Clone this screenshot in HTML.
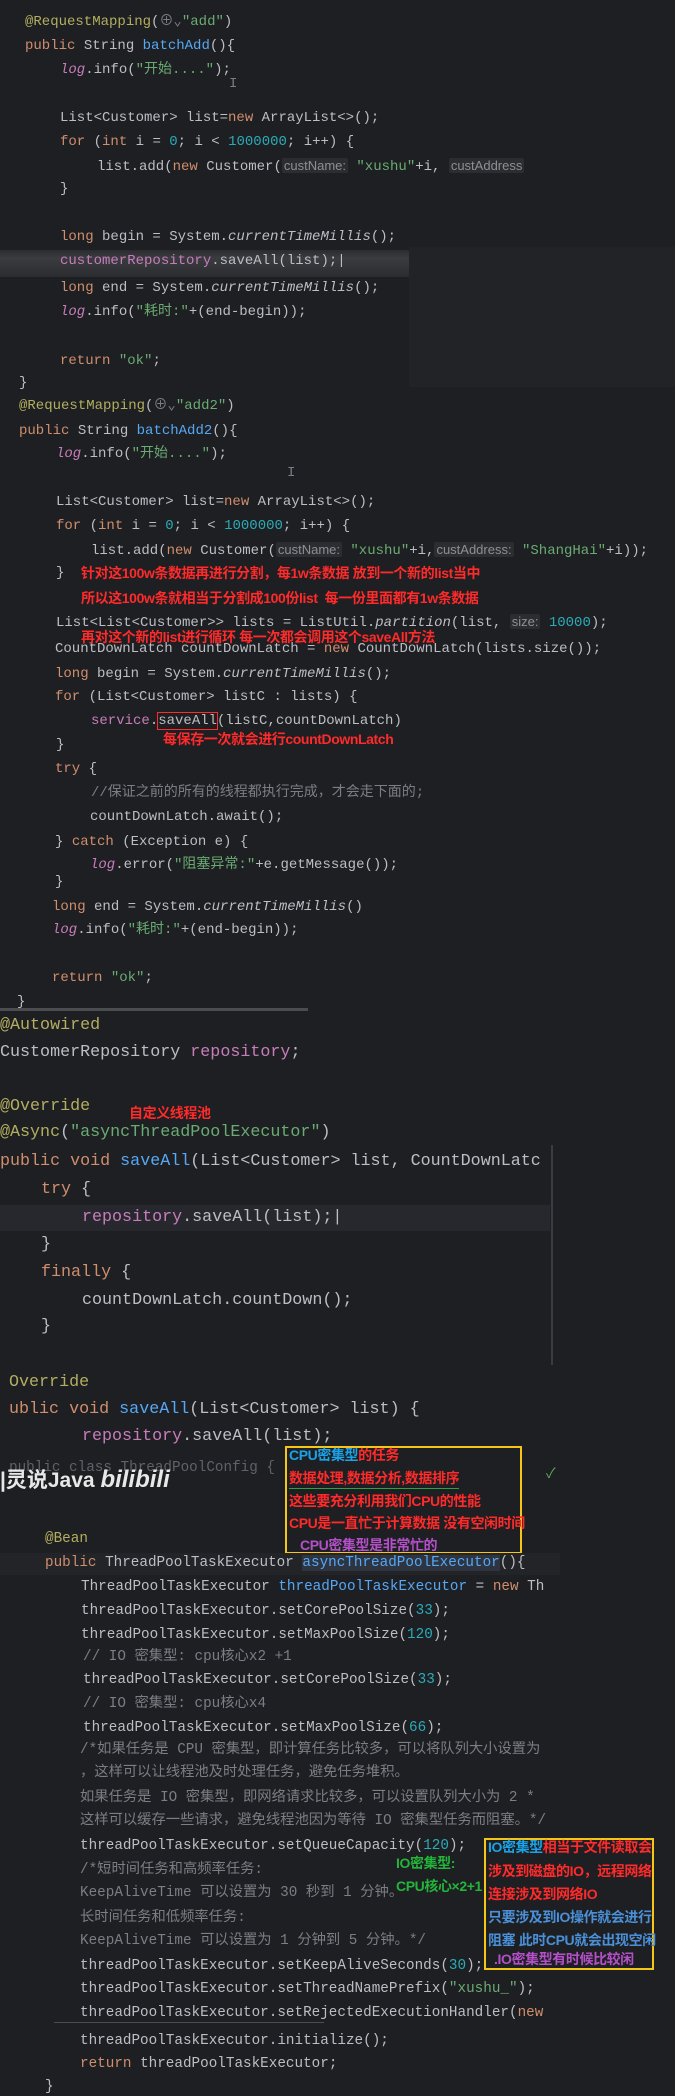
<!DOCTYPE html>
<html><head><meta charset="utf-8"><style>
body{margin:0;width:675px;height:2096px;background:#1e1f22;overflow:hidden;position:relative;font-family:"Liberation Mono","Noto Sans CJK SC",monospace;color:#bcbec4}
.l{position:absolute;white-space:pre;line-height:20px;font-size:14px}
.b{font-size:16.7px;line-height:22px}
.t{font-size:14.3px}
.k{color:#cf8e6d}.a{color:#b3ae60}.s{color:#6aab73}.n{color:#2aacb8}.f{color:#c77dbb}.m{color:#56a8f5}.c{color:#7a7e85}.i{font-style:italic}
.h{background:#2b2d30;color:#8c8f94;font-family:"Liberation Sans",sans-serif;font-size:13px;padding:0 2px;border-radius:2px}
.r{position:absolute;white-space:pre;font-family:"Liberation Sans","Noto Sans CJK SC",sans-serif;font-weight:bold;font-size:14px;color:#ff2a2a;line-height:20px;letter-spacing:-0.4px}
.box{position:absolute;border:2px solid #f5c518}
</style></head><body>
<div style="position:absolute;left:409px;top:247px;width:266px;height:140px;background:#222327"></div>
<div style="position:absolute;left:0;top:250px;width:409px;height:27px;background:linear-gradient(#2a2c30,#3a3c40 30%,#2a2c30)"></div>
<div class="l" style="left:25px;top:12px"><span class="a">@RequestMapping</span>(<span class="c">⊕⌄</span><span class="s">"add"</span>)</div>
<div class="l" style="left:25px;top:36px"><span class="k">public</span> String <span class="m">batchAdd</span>(){</div>
<div class="l" style="left:60px;top:60px"><span class="f i">log</span>.info(<span class="s">"开始...."</span>);</div>
<div class="l c" style="left:229px;top:74px">I</div>
<div class="l" style="left:60px;top:108px">List&lt;Customer&gt; list=<span class="k">new</span> ArrayList&lt;&gt;();</div>
<div class="l" style="left:60px;top:132px"><span class="k">for</span> (<span class="k">int</span> i = <span class="n">0</span>; i &lt; <span class="n">1000000</span>; i++) {</div>
<div class="l" style="left:97px;top:156px">list.add(<span class="k">new</span> Customer(<span class="h">custName:</span> <span class="s">"xushu"</span>+i, <span class="h">custAddress</span></div>
<div class="l" style="left:60px;top:179px">}</div>
<div class="l" style="left:60px;top:227px"><span class="k">long</span> begin = System.<span class="i">currentTimeMillis</span>();</div>
<div class="l" style="left:60px;top:251px"><span class="f">customerRepository</span>.saveAll(list);|</div>
<div class="l" style="left:60px;top:278px"><span class="k">long</span> end = System.<span class="i">currentTimeMillis</span>();</div>
<div class="l" style="left:60px;top:302px"><span class="f i">log</span>.info(<span class="s">"耗时:"</span>+(end-begin));</div>
<div class="l" style="left:60px;top:351px"><span class="k">return</span> <span class="s">"ok"</span>;</div>
<div class="l" style="left:19px;top:373px">}</div>

<div class="l" style="left:19px;top:396px"><span class="a">@RequestMapping</span>(<span class="c">⊕⌄</span><span class="s">"add2"</span>)</div>
<div class="l" style="left:19px;top:421px"><span class="k">public</span> String <span class="m">batchAdd2</span>(){</div>
<div class="l" style="left:56px;top:444px"><span class="f i">log</span>.info(<span class="s">"开始...."</span>);</div>
<div class="l c" style="left:287px;top:463px">I</div>
<div class="l" style="left:56px;top:492px">List&lt;Customer&gt; list=<span class="k">new</span> ArrayList&lt;&gt;();</div>
<div class="l" style="left:56px;top:516px"><span class="k">for</span> (<span class="k">int</span> i = <span class="n">0</span>; i &lt; <span class="n">1000000</span>; i++) {</div>
<div class="l" style="left:91px;top:540px">list.add(<span class="k">new</span> Customer(<span class="h">custName:</span> <span class="s">"xushu"</span>+i,<span class="h">custAddress:</span> <span class="s">"ShangHai"</span>+i));</div>
<div class="l" style="left:56px;top:563px">}</div>
<div class="r" style="left:81px;top:563px">针对这100w条数据再进行分割，每1w条数据 放到一个新的list当中</div>
<div class="r" style="left:81px;top:588px">所以这100w条就相当于分割成100份list  每一份里面都有1w条数据</div>
<div class="l" style="left:56px;top:612px">List&lt;List&lt;Customer&gt;&gt; lists = ListUtil.<span class="i">partition</span>(list, <span class="h">size:</span> <span class="n">10000</span>);</div>
<div class="l" style="left:55px;top:639px">CountDownLatch countDownLatch = <span class="k">new</span> CountDownLatch(lists.size());</div>
<div class="r" style="left:81px;top:627px">再对这个新的list进行循环 每一次都会调用这个saveAll方法</div>
<div class="l" style="left:55px;top:664px"><span class="k">long</span> begin = System.<span class="i">currentTimeMillis</span>();</div>
<div class="l" style="left:55px;top:687px"><span class="k">for</span> (List&lt;Customer&gt; listC : lists) {</div>
<div class="l" style="left:91px;top:711px"><span class="f">service</span>.<span style="outline:1px solid #ff2a2a">saveAll</span>(listC,countDownLatch)</div>
<div class="r" style="left:163px;top:729px">每保存一次就会进行countDownLatch</div>
<div class="l" style="left:56px;top:735px">}</div>
<div class="l" style="left:55px;top:759px"><span class="k">try</span> {</div>
<div class="l c" style="left:91px;top:783px">//保证之前的所有的线程都执行完成，才会走下面的;</div>
<div class="l" style="left:90px;top:807px">countDownLatch.await();</div>
<div class="l" style="left:55px;top:832px">} <span class="k">catch</span> (Exception e) {</div>
<div class="l" style="left:90px;top:855px"><span class="f i">log</span>.error(<span class="s">"阻塞异常:"</span>+e.getMessage());</div>
<div class="l" style="left:55px;top:872px">}</div>
<div class="l" style="left:52px;top:897px"><span class="k">long</span> end = System.<span class="i">currentTimeMillis</span>()</div>
<div class="l" style="left:52px;top:920px"><span class="f i">log</span>.info(<span class="s">"耗时:"</span>+(end-begin));</div>
<div class="l" style="left:52px;top:968px"><span class="k">return</span> <span class="s">"ok"</span>;</div>
<div class="l" style="left:17px;top:992px">}</div>
<div style="position:absolute;left:0;top:1008px;width:308px;height:3px;background:#4a4c50"></div>

<div style="position:absolute;left:551px;top:1145px;width:2px;height:220px;background:#3a3c40"></div>
<div style="position:absolute;left:0;top:1205px;width:550px;height:26px;background:#26282e"></div>
<div class="l b" style="left:0;top:1015px"><span class="a">@Autowired</span></div>
<div class="l b" style="left:0;top:1042px">CustomerRepository <span class="f">repository</span>;</div>
<div class="l b" style="left:0;top:1096px"><span class="a">@Override</span></div>
<div class="r" style="left:129px;top:1103px">自定义线程池</div>
<div class="l b" style="left:0;top:1122px"><span class="a">@Async</span>(<span class="s">"asyncThreadPoolExecutor"</span>)</div>
<div class="l b" style="left:0;top:1151px"><span class="k">public void</span> <span class="m">saveAll</span>(List&lt;Customer&gt; list, CountDownLatc</div>
<div class="l b" style="left:41px;top:1179px"><span class="k">try</span> {</div>
<div class="l b" style="left:82px;top:1207px"><span class="f">repository</span>.saveAll(list);|</div>
<div class="l b" style="left:41px;top:1234px">}</div>
<div class="l b" style="left:41px;top:1262px"><span class="k">finally</span> {</div>
<div class="l b" style="left:82px;top:1290px">countDownLatch.countDown();</div>
<div class="l b" style="left:41px;top:1316px">}</div>
<div class="l b" style="left:9px;top:1372px"><span class="a">Override</span></div>
<div class="l b" style="left:9px;top:1399px"><span class="k">ublic void</span> <span class="m">saveAll</span>(List&lt;Customer&gt; list) {</div>
<div class="l b" style="left:82px;top:1426px"><span class="f">repository</span>.saveAll(list);</div>

<div class="l t c" style="left:9px;top:1458px;opacity:.7">public class ThreadPoolConfig {</div>
<div class="l" style="left:0;top:1466px;font-family:'Liberation Sans','Noto Sans CJK SC',sans-serif;font-size:21px;line-height:28px;color:#e8e8e8;font-weight:bold">|灵说Java <span style="font-size:24px;font-style:italic">bilibili</span></div>
<div class="l" style="left:546px;top:1465px;color:#5fa35f">✓</div>
<div class="box" style="left:285px;top:1446px;width:233px;height:104px"></div>
<div class="r" style="left:289px;top:1445px"><span style="color:#1aa3e8">CPU密集型</span>的任务</div>
<div class="r" style="left:289px;top:1468px;border-bottom:1px solid #2ea043">数据处理,数据分析,数据排序</div>
<div class="r" style="left:289px;top:1491px">这些要充分利用我们CPU的性能</div>
<div class="r" style="left:289px;top:1513px">CPU是一直忙于计算数据 没有空闲时间</div>
<div class="r" style="left:300px;top:1535px;color:#b350c8">CPU密集型是非常忙的</div>

<div style="position:absolute;left:0;top:1553px;width:560px;height:22px;background:#232428"></div>
<div class="l t" style="left:45px;top:1529px"><span class="a">@Bean</span></div>
<div class="l t" style="left:45px;top:1553px"><span class="k">public</span> ThreadPoolTaskExecutor <span class="m" style="background:#2e3440">asyncThreadPoolExecutor</span>(){</div>
<div style="position:absolute;left:0;top:1575px;width:560px;height:521px;overflow:hidden">
<div class="l t" style="left:81px;top:2px">ThreadPoolTaskExecutor <span class="m">threadPoolTaskExecutor</span> = <span class="k">new</span> Th</div>
<div class="l t" style="left:81px;top:26px">threadPoolTaskExecutor.setCorePoolSize(<span class="n">33</span>);</div>
<div class="l t" style="left:81px;top:50px">threadPoolTaskExecutor.setMaxPoolSize(<span class="n">120</span>);</div>
<div class="l t c" style="left:83px;top:72px">// IO 密集型: cpu核心x2 +1</div>
<div class="l t" style="left:83px;top:95px">threadPoolTaskExecutor.setCorePoolSize(<span class="n">33</span>);</div>
<div class="l t c" style="left:83px;top:119px">// IO 密集型: cpu核心x4</div>
<div class="l t" style="left:83px;top:143px">threadPoolTaskExecutor.setMaxPoolSize(<span class="n">66</span>);</div>
<div class="l t c" style="left:80px;top:165px">/*如果任务是 CPU 密集型，即计算任务比较多，可以将队列大小设置为</div>
<div class="l t c" style="left:80px;top:188px">，这样可以让线程池及时处理任务，避免任务堆积。</div>
<div class="l t c" style="left:80px;top:213px">如果任务是 IO 密集型，即网络请求比较多，可以设置队列大小为 2 * </div>
<div class="l t c" style="left:80px;top:236px">这样可以缓存一些请求，避免线程池因为等待 IO 密集型任务而阻塞。*/</div>
<div class="l t" style="left:80px;top:261px">threadPoolTaskExecutor.setQueueCapacity(<span class="n">120</span>);</div>
<div class="l t c" style="left:80px;top:285px">/*短时间任务和高频率任务:</div>
<div class="l t c" style="left:80px;top:308px">KeepAliveTime 可以设置为 30 秒到 1 分钟。</div>
<div class="l t c" style="left:80px;top:333px">长时间任务和低频率任务:</div>
<div class="l t c" style="left:80px;top:356px">KeepAliveTime 可以设置为 1 分钟到 5 分钟。*/</div>
<div class="l t" style="left:80px;top:381px">threadPoolTaskExecutor.setKeepAliveSeconds(<span class="n">30</span>);</div>
<div class="l t" style="left:80px;top:404px">threadPoolTaskExecutor.setThreadNamePrefix(<span class="s">"xushu_"</span>);</div>
<div class="l t" style="left:80px;top:428px">threadPoolTaskExecutor.setRejectedExecutionHandler(<span class="k">new</span></div>
<div style="position:absolute;left:54px;top:447px;width:270px;height:1px;background:#4a4c50"></div>
<div class="l t" style="left:80px;top:456px">threadPoolTaskExecutor.initialize();</div>
<div class="l t" style="left:80px;top:479px"><span class="k">return</span> threadPoolTaskExecutor;</div>
<div class="l t" style="left:45px;top:502px">}</div>
</div>
<div class="r" style="left:396px;top:1853px;color:#22b53a">IO密集型:</div>
<div class="r" style="left:396px;top:1876px;color:#22b53a">CPU核心×2+1</div>
<div class="box" style="left:484px;top:1838px;width:166px;height:128px"></div>
<div class="r" style="left:488px;top:1837px"><span style="color:#1aa3e8">IO密集型</span>相当于文件读取会</div>
<div class="r" style="left:488px;top:1861px">涉及到磁盘的IO，远程网络</div>
<div class="r" style="left:488px;top:1884px">连接涉及到网络IO</div>
<div class="r" style="left:488px;top:1907px;color:#4a90d9">只要涉及到IO操作就会进行</div>
<div class="r" style="left:488px;top:1930px;color:#4a90d9">阻塞 此时CPU就会出现空闲</div>
<div class="r" style="left:494px;top:1949px;color:#b350c8">.IO密集型有时候比较闲</div>
</body></html>
